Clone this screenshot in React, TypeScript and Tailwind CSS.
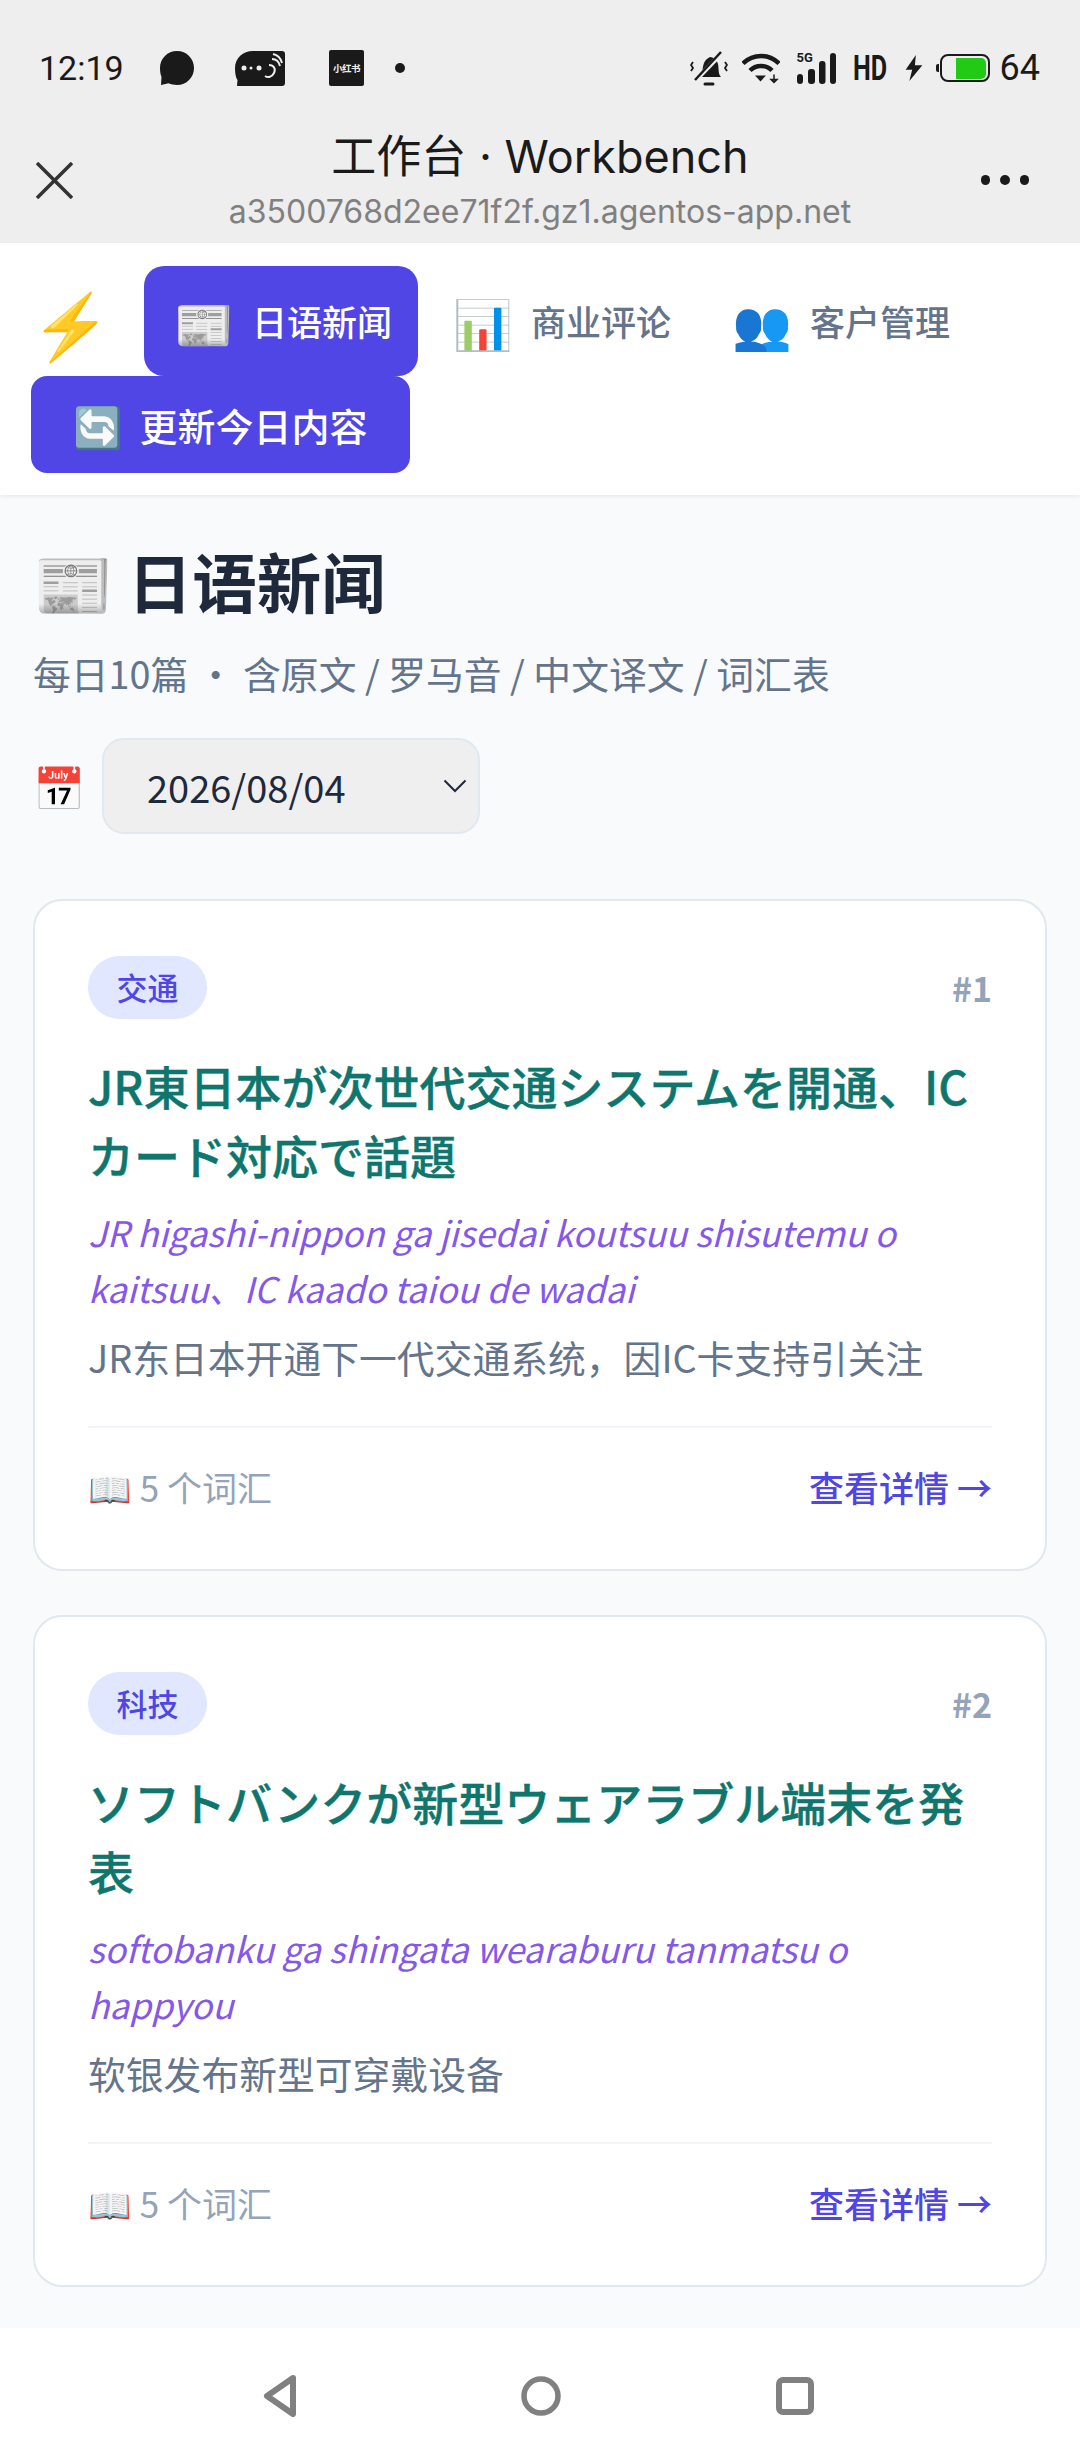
const FONT = '"Noto Sans CJK SC", "Noto Sans", sans-serif';

function Card({ tag, num, title, romaji, zh }: { tag: string; num: string; title: string; romaji: string; zh: string }) {
  return (
    <div className="flex h-[672px] flex-col rounded-[29px] border-2 border-[#e2e8f0] bg-white px-[53px] pt-[55px]">
      <div className="flex h-[63px] items-center justify-between">
        <span className="flex h-[63px] w-[119px] items-center justify-center rounded-full bg-[#e0e7ff] text-[31px] font-medium text-[#4f46e5]">{tag}</span>
        <span className="text-[34px] font-bold text-[#94a3b8]">{num}</span>
      </div>
      <h2 className="mt-[32px] text-[46px] font-medium leading-[69px] text-[#0f766e] [-webkit-text-stroke:0.4px_#0f766e]">{title}</h2>
      <p className="mt-[15px] text-[35.200px] italic leading-[56px] text-[#8458e8]">{romaji}</p>
      <p className="mt-[13px] text-[37.800px] leading-[56px] text-[#64748b]">{zh}</p>
      <div className="mt-[41px] flex items-center justify-between border-t-2 border-[#f1f5f9] pt-[31px]">
        <span className="text-[35px] leading-[56px] text-[#94a3b8]">📖 5 个词汇</span>
        <span className="text-[35px] font-medium leading-[56px] text-[#4f46e5]">查看详情 →</span>
      </div>
    </div>
  );
}

function Tab({ icon, label, active, cls }: { icon: string; label: string; active?: boolean; cls: string }) {
  return (
    <span className={`${cls} flex h-[110px] items-center rounded-[20px] pl-[30px] pr-[26px] text-[35px] font-medium ${active ? 'bg-[#4f46e5] text-white' : 'text-[#64748b]'}`}>
      <span className="w-[78px] text-[48px] leading-none">{icon}</span>
      <span>{label}</span>
    </span>
  );
}

export default function App() {
  return (
    <div className="flex h-[2460px] w-[1080px] flex-col overflow-hidden bg-[#f8fafc]" style={{ fontFamily: FONT }}>
      <div className="bg-[#eeeeee]">
        <div className="flex h-[100px] items-center justify-between pl-[39px] pr-[40px] pt-[36px] text-[#1a1a1a]" style={{ fontFamily: 'Roboto, sans-serif' }}>
          <div className="flex items-center">
            <span className="w-[78px] text-[34px] leading-none">12:19</span>
            <svg className="ml-[42px]" width="36" height="36" viewBox="0 0 36 36"><path d="M18 1c9.500 0 17 7.500 17 17s-7.500 17-17 17c-3 0-6-.5-8.500-1.700L2 35l.5-8C1.500 24.500 1 21.500 1 18 1 8.500 8.500 1 18 1z" fill="#1a1a1a" /></svg>
            <svg className="ml-[39px]" width="52" height="36" viewBox="0 0 50 36"><path d="M18 1h29a3 3 0 0 1 3 3v29a3 3 0 0 1-3 3H2l.5-6C1 28 0 24 0 18 0 8 8 1 18 1z" fill="#1a1a1a" /><circle cx="9" cy="18" r="2.500" fill="#eee" /><circle cx="16" cy="18" r="1.500" fill="#eee" /><circle cx="24" cy="18" r="2.500" fill="#eee" /><path d="M34 15c5 0 7 4 5 8s-6 5-9 3M37 9c4 0 7 3 8 7M38 4c5 1 8 5 9 9" fill="none" stroke="#eee" strokeWidth="2" /></svg>
            <span className="ml-[43px] flex h-[36px] w-[35px] items-center justify-center rounded-[2px] bg-[#1a1a1a] text-[9.500px] font-bold tracking-[-0.5px] text-[#eee]" style={{ fontFamily: FONT }}>小红书</span>
            <span className="ml-[31px] h-[10px] w-[10px] rounded-full bg-[#1a1a1a]" />
          </div>
          <div className="flex items-center">
            <svg width="38" height="35" viewBox="0 0 38 35" fill="none"><path d="M10 26c3-3 2-9 4-14 1-3 4-5 6-6 3 0 7 3 8 7 1 5 0 10 3 13H10z" fill="#1a1a1a" /><path d="M15 33h8" stroke="#1a1a1a" strokeWidth="3" strokeLinecap="round" /><path d="M6 29 31 3" stroke="#eee" strokeWidth="4.500" /><path d="M5 29 31 1" stroke="#1a1a1a" strokeWidth="2.500" /><path d="M3 11 1 14l2 3-2 3M35 11l2 3-2 3 2 3" stroke="#1a1a1a" strokeWidth="1.800" /></svg>
            <svg className="ml-[14px]" width="38" height="31" viewBox="0 0 38 30" fill="none"><path d="M1 10c10-10 26-10 36 0" stroke="#1a1a1a" strokeWidth="4.500" /><path d="M8 17c6-6 16-6 22 0" stroke="#1a1a1a" strokeWidth="4.500" /><path d="M13 22h11l-5.500 6z" fill="#1a1a1a" /><path d="M32 21v7M29 26h6l-3 3z" stroke="#1a1a1a" strokeWidth="1.500" /></svg>
            <span className="relative ml-[17px] block h-[31px] w-[39px]">
              <span className="absolute left-0 top-[-2px] text-[13px] font-bold leading-none">5G</span>
              <svg className="absolute inset-0" width="39" height="31" viewBox="0 0 39 31"><rect x="0" y="21" width="6" height="10" rx="3" fill="#1a1a1a" /><rect x="11" y="16" width="7" height="15" rx="3" fill="#1a1a1a" /><rect x="22" y="8" width="6.500" height="23" rx="3" fill="#1a1a1a" /><rect x="33" y="0" width="6" height="31" rx="3" fill="#1a1a1a" /></svg>
            </span>
            <span className="ml-[17px] w-[33px] origin-left scale-x-[0.72] text-[35px] font-bold leading-none whitespace-nowrap">HD</span>
            <svg className="ml-[19px]" width="18" height="26" viewBox="0 0 18 28"><path d="M11 0 0 16h7l-3 12 14-17h-8z" fill="#1a1a1a" /></svg>
            <span className="ml-[13px] h-[8px] w-[3px] rounded-l-[2px] bg-[#1a1a1a]" />
            <span className="relative ml-[1px] block h-[28px] w-[50px] rounded-[8px] border-[2.500px] border-[#1a1a1a]">
              <span className="absolute bottom-[1.500px] right-[1.500px] top-[1.500px] w-[30px] rounded-r-[5px] bg-[#22c915]" />
            </span>
            <span className="ml-[10px] text-[36px] leading-none">64</span>
          </div>
        </div>
        <div className="grid h-[143px] grid-cols-[1fr_auto_1fr]">
          <div className="pl-[36px] pt-[62px]">
            <svg width="37" height="37" viewBox="0 0 37 37"><path d="M1 1l35 35M36 1 1 36" stroke="#333" strokeWidth="3.500" /></svg>
          </div>
          <div className="flex flex-col items-center pt-[27px]" style={{ fontFamily: 'Inter, "Noto Sans CJK SC", sans-serif' }}>
            <span className="text-[45px] leading-[60px] text-[#1a1a1a]">工作台 · Workbench</span>
            <span className="text-[32px] leading-[50px] text-[#808080]">a3500768d2ee71f2f.gz1.agentos-app.net</span>
          </div>
          <div className="flex justify-end gap-[10px] pr-[51px] pt-[75px]">
            <span className="h-[9.500px] w-[9.500px] rounded-full bg-[#1a1a1a]" />
            <span className="h-[9.500px] w-[9.500px] rounded-full bg-[#1a1a1a]" />
            <span className="h-[9.500px] w-[9.500px] rounded-full bg-[#1a1a1a]" />
          </div>
        </div>
      </div>

      <nav className="flex flex-wrap items-center bg-white px-[31px] pb-[22px] pt-[23px] shadow-[0_2px_4px_rgba(0,0,0,0.06)]">
        <span className="flex w-[113px] items-center text-[64px] leading-none">⚡</span>
        <Tab cls="" icon="📰" label="日语新闻" active />
        <Tab cls="ml-[5px]" icon="📊" label="商业评论" />
        <Tab cls="ml-[5px]" icon="👥" label="客户管理" />
        <span className="flex h-[97px] w-[379px] items-center justify-center gap-[16px] rounded-[16px] bg-[#4f46e5] text-[38px] font-medium text-white"><span className="text-[40px] leading-none">🔄</span><span>更新今日内容</span></span>
      </nav>

      <main className="flex flex-1 flex-col px-[33px] pt-[43px]">
        <h1 className="text-[64.500px] font-bold leading-[84px] text-[#1e293b]">📰 日语新闻</h1>
        <p className="mt-[24px] text-[37.800px] leading-[54px] text-[#64748b]">每日10篇 · 含原文 / 罗马音 / 中文译文 / 词汇表</p>
        <div className="mt-[38px] flex items-center">
          <span className="w-[69px] text-[42px] leading-none">📅</span>
          <div className="flex h-[96px] w-[378px] items-center justify-between rounded-[22px] border-2 border-[#e2e8f0] bg-[#efefef] pl-[43px] pr-[11px]">
            <span className="text-[38px] text-[#1e293b]">2026/08/04</span>
            <svg width="24" height="14" viewBox="0 0 24 14"><path d="M1.500 1.500 12 12 22.500 1.500" fill="none" stroke="#1e293b" strokeWidth="2" /></svg>
          </div>
        </div>
        <div className="mt-[65px] flex flex-col gap-[44px]">
          <Card tag="交通" num="#1" title="JR東日本が次世代交通システムを開通、ICカード対応で話題" romaji="JR higashi-nippon ga jisedai koutsuu shisutemu o kaitsuu、IC kaado taiou de wadai" zh="JR东日本开通下一代交通系统，因IC卡支持引关注" />
          <Card tag="科技" num="#2" title="ソフトバンクが新型ウェアラブル端末を発表" romaji="softobanku ga shingata wearaburu tanmatsu o happyou" zh="软银发布新型可穿戴设备" />
        </div>
      </main>

      <div className="flex h-[132px] shrink-0 items-center bg-white pl-[262px] pt-[4px]">
        <svg width="36" height="44" viewBox="0 0 36 44"><path d="M31 4 5 22l26 18z" fill="none" stroke="#808080" strokeWidth="6" strokeLinejoin="round" /></svg>
        <svg className="ml-[223px]" width="40" height="40" viewBox="0 0 40 40"><circle cx="20" cy="20" r="17" fill="none" stroke="#808080" strokeWidth="5.500" /></svg>
        <svg className="ml-[215px]" width="38" height="38" viewBox="0 0 38 38"><rect x="3" y="3" width="32" height="32" rx="4" fill="none" stroke="#808080" strokeWidth="6" /></svg>
      </div>
    </div>
  );
}
